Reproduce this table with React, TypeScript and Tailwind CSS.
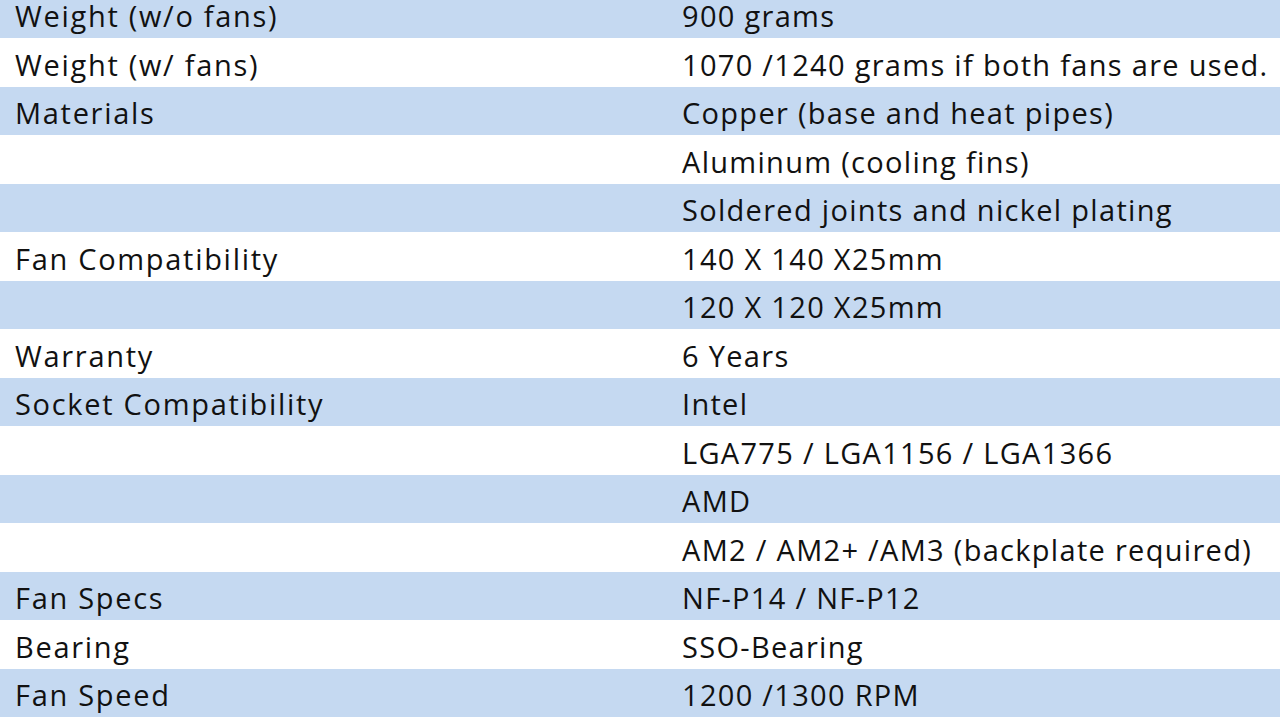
import React from "react";

const rows: [string, string][] = [
  ["Weight (w/o fans)", "900 grams"],
  ["Weight (w/ fans)", "1070 /1240 grams if both fans are used."],
  ["Materials", "Copper (base and heat pipes)"],
  ["", "Aluminum (cooling fins)"],
  ["", "Soldered joints and nickel plating"],
  ["Fan Compatibility", "140 X 140 X25mm"],
  ["", "120 X 120 X25mm"],
  ["Warranty", "6 Years"],
  ["Socket Compatibility", "Intel"],
  ["", "LGA775 / LGA1156 / LGA1366"],
  ["", "AMD"],
  ["", "AM2 / AM2+ /AM3 (backplate required)"],
  ["Fan Specs", "NF-P14 / NF-P12"],
  ["Bearing", "SSO-Bearing"],
  ["Fan Speed", "1200 /1300 RPM"],
];

export default function App() {
  return (
    <div className="w-[1280px] h-[722px] overflow-hidden bg-white">
      <div
        className="flex flex-col text-[29px] font-medium text-[#111] leading-none"
        style={{ fontFamily: "'Open Sans', 'Liberation Sans', sans-serif" }}
      >
        {rows.map(([a, b], i) => (
          <div
            key={i}
            className={`flex items-center ${i === 0 ? "h-[38px] pb-[6.5px]" : "h-[48.5px] pt-[4px]"} ${i % 2 === 0 ? "bg-[#c5d9f1]" : "bg-white"}`}
          >
            <div className="w-[682px] pl-[15px] whitespace-nowrap tracking-[1.7px]">{a}</div>
            <div className="flex-1 whitespace-nowrap tracking-[1.3px]">{b}</div>
          </div>
        ))}
      </div>
    </div>
  );
}
